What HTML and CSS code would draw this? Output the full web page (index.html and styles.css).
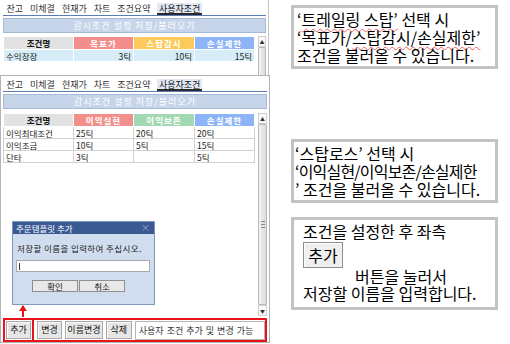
FILE: index.html
```html
<!DOCTYPE html>
<html>
<head>
    <meta charset="utf-8">
    <title>사용자조건</title>
    <link rel="stylesheet" href="styles.css">
</head>
<body>

<div class="page">
    <div class="left">

        <!-- 스탑감시 창 -->
        <div class="win win1">
            <div class="tabs">
                <span class="tab">잔고</span>
                <span class="tab">미체결</span>
                <span class="tab">현재가</span>
                <span class="tab">차트</span>
                <span class="tab">조건요약</span>
                <span class="tab on">사용자조건</span>
            </div>
            <div class="caption">감시조건 설정 저장/불러오기</div>
            <div class="sheet short">
                <table>
                    <colgroup><col class="c0"><col class="c1"><col class="c2"><col class="c3"></colgroup>
                    <tr>
                        <th class="name">조건명</th>
                        <th class="red">목표가</th>
                        <th class="orange">스탑감시</th>
                        <th class="blue">손실제한</th>
                    </tr>
                    <tr class="picked">
                        <td>수익장장</td>
                        <td class="num">3틱</td>
                        <td class="num">10틱</td>
                        <td class="num">15틱</td>
                    </tr>
                </table>
                <div class="vscroll">
                    <div class="arrow">&#9650;</div>
                    <div class="thumb"></div>
                </div>
            </div>
        </div>

        <!-- 스탑로스 창 -->
        <div class="win win2">
            <div class="tabs">
                <span class="tab">잔고</span>
                <span class="tab">미체결</span>
                <span class="tab">현재가</span>
                <span class="tab">차트</span>
                <span class="tab">조건요약</span>
                <span class="tab on">사용자조건</span>
            </div>
            <div class="caption">감시조건 설정 저장/불러오기</div>
            <div class="sheet tall">
                <table>
                    <colgroup><col class="c0"><col class="c1"><col class="c2"><col class="c3"></colgroup>
                    <tr>
                        <th class="name">조건명</th>
                        <th class="red">이익실현</th>
                        <th class="green">이익보존</th>
                        <th class="blue">손실제한</th>
                    </tr>
                    <tr><td>이익최대조건</td><td>25틱</td><td>20틱</td><td>20틱</td></tr>
                    <tr><td>이익조금</td><td>10틱</td><td>5틱</td><td>15틱</td></tr>
                    <tr><td>단타</td><td>3틱</td><td></td><td>5틱</td></tr>
                </table>
                <div class="vscroll">
                    <div class="arrow">&#9650;</div>
                    <div class="thumb"><span class="grip"></span></div>
                    <div class="arrow">&#9660;</div>
                </div>
            </div>

            <div class="btnbar">
                <span class="first"><span class="btn w25">추가</span></span>
                <span class="btn w26">변경</span>
                <span class="btn w39">이름변경</span>
                <span class="btn w27">삭제</span>
                <span class="field">사용자 조건 추가 및 변경 가능</span>
            </div>

            <div class="dialog">
                <div class="dlg-title">주문템플릿 추가<span class="dlg-x">&#215;</span></div>
                <div class="dlg-text">저장할 이름을 입력하여 주십시오.</div>
                <div class="dlg-input"><span class="caret"></span></div>
                <div class="dlg-btns">
                    <span class="dbtn">확인</span>
                    <span class="dbtn">취소</span>
                </div>
            </div>
            <div class="uparrow"></div>
        </div>
    </div>

    <div class="right">
        <div class="note n1">
            ‘<span class="squiggle">트레일링 스탑’</span> 선택 시<br>
            ‘목표가/<span class="squiggle">스탑감시/손실제한’</span><br>
            조건을 불러올 수 있습니다.
        </div>
        <div class="note n2">
            ‘스탑로스’ 선택 시<br>
            <span class="tight">‘이익실현/이익보존/손실제한</span><br>
            ’ 조건을 불러올 수 있습니다.
        </div>
        <div class="note n3">
            조건을 설정한 후 좌측<br>
            <span class="fakebtn">추가</span>
            <div class="indent">버튼을 눌러서</div>
            저장할 이름을 입력합니다.
        </div>
    </div>
</div>

</body>
</html>
```

FILE: styles.css
```css
body{
    margin: 0;
    background: #fff;
    font-family: "Noto Sans CJK KR", "Noto Sans", sans-serif;
    color: #000;
}
.page{
    display: flex;
    width: 510px;
    height: 344px;
    overflow: hidden;
}
.left{
    width: 270px;
    flex: none;
}
.right{
    margin-left: 21px;
    width: 207px;
    flex: none;
}

/* windows */
.win{
    box-sizing: border-box;
    background: #fff;
}
.win1{
    height: 75px;
    overflow: hidden;
    padding: 3px 2px 0 3px;
    width: 269px;
    border-right: 1px solid #c4c4c4;
}
.win2{
    position: relative;
    height: 268px;
    width: 270px;
    border: 1px solid #b4b4b4;
    padding: 3px 2px 0 2px;
}

.tabs{
    display: flex;
    height: 12px;
    border-bottom: 1px solid #5b7db5;
    font-size: 9px;
    line-height: 11px;
    color: #333;
}
.tab{
    padding: 0 3.5px;
    white-space: nowrap;
}
.tab.on{
    background: #e3eaf5;
    border-bottom: 2px solid #2a2a2a;
    color: #111;
    margin-left: 3px;
    padding: 0 2px;
}

.caption{
    margin-top: 2px;
    height: 13px;
    background: #c6d5ea;
    border: 1px solid #a6b9d6;
    color: #fff;
    text-align: center;
    font-size: 9px;
    line-height: 13px;
    letter-spacing: 1px;
}

.sheet{
    display: flex;
    margin-top: 3px;
}
.sheet.short{
    height: 45px;
}
.sheet.tall{
    margin-top: 4px;
    height: 203px;
}
.sheet table{
    width: 251px;
    border-collapse: collapse;
    table-layout: fixed;
    font-size: 8.5px;
    align-self: flex-start;
}
col.c0{ width: 70px; }
col.c1{ width: 60px; }
col.c2{ width: 61px; }
col.c3{ width: 60px; }

th{
    height: 12px;
    padding: 0;
    border: 1px solid #fff;
    color: #fff;
    font-weight: bold;
    line-height: 11px;
    letter-spacing: 1px;
}
th.name{ background: #e2e2e2; color: #111; letter-spacing: 0; }
th.red{ background: #f28f8c; }
th.orange{ background: #fdc95c; }
th.blue{ background: #8db4f6; }
th.green{ background: #a3d8b3; }

td{
    height: 11px;
    padding: 0 2px;
    border: 1px solid #d2d2d2;
    line-height: 10px;
    white-space: nowrap;
    color: #222;
}
tr.picked td{
    background: #d6ecf6;
    border-color: #fff;
}
td.num{
    text-align: right;
}

.vscroll{
    width: 10px;
    margin-left: 3px;
    display: flex;
    flex-direction: column;
}
.arrow{
    height: 11px;
    box-sizing: border-box;
    border: 1px solid #cfcfcf;
    background: #fbfbfb;
    font-size: 5px;
    line-height: 9px;
    text-align: center;
    color: #333;
}
.thumb{
    flex: 1;
    position: relative;
    background: linear-gradient(90deg, #f4f4f4, #dadada);
    border: 1px solid #b9b9b9;
    border-radius: 1px;
}
.grip{
    position: absolute;
    left: 2px;
    top: 96px;
    width: 4px;
    height: 5px;
    border-top: 1px solid #888;
    border-bottom: 1px solid #888;
}
.grip:after{
    content: "";
    position: absolute;
    left: 0;
    top: 2px;
    width: 4px;
    border-top: 1px solid #888;
}

/* bottom buttons */
.btnbar{
    margin-top: 2px;
    height: 24px;
    box-sizing: border-box;
    border: 2px solid #e5141b;
    display: flex;
    align-items: center;
    gap: 3px;
    font-size: 9px;
}
.first{
    align-self: stretch;
    display: flex;
    align-items: center;
    padding: 0 1px 0 1px;
    border-right: 2px solid #e5141b;
}
.btn{
    box-sizing: border-box;
    height: 18px;
    line-height: 16px;
    text-align: center;
    background: #e6e6e6;
    border: 1px solid #a9a9a9;
    box-shadow: inset 1px 1px 0 #fafafa;
    color: #111;
}
.w25{ width: 25px; }
.w26{ width: 26px; }
.w39{ width: 39px; }
.w27{ width: 27px; }
.field{
    box-sizing: border-box;
    width: 135px;
    height: 19px;
    line-height: 17px;
    border: 1px solid #b4b4b4;
    padding-left: 3px;
    color: #333;
    word-spacing: 1px;
}

/* dialog over the sheet */
.dialog{
    position: absolute;
    left: 11px;
    top: 145px;
    width: 143px;
    height: 84px;
    box-sizing: border-box;
    background: #d0ddee;
    border: 1px solid #7d97bf;
    font-size: 8.5px;
}
.dlg-title{
    height: 12px;
    background: #3b5a94;
    color: #fff;
    line-height: 12px;
    padding-left: 3px;
    position: relative;
}
.dlg-x{
    position: absolute;
    right: 4px;
    top: 0;
    color: #9fb0cf;
    font-size: 9px;
}
.dlg-text{
    margin: 9px 0 0 4px;
    line-height: 11px;
    letter-spacing: 0.4px;
    color: #222;
}
.dlg-input{
    margin: 6px 0 0 3px;
    width: 134px;
    height: 12px;
    box-sizing: border-box;
    background: #fff;
    border: 1px solid #a9a9a9;
    position: relative;
}
.caret{
    position: absolute;
    left: 2px;
    top: 2px;
    height: 7px;
    border-left: 1px solid #333;
}
.dlg-btns{
    display: flex;
    gap: 1px;
    margin: 8px 0 0 19px;
}
.dbtn{
    box-sizing: border-box;
    width: 46px;
    height: 12px;
    line-height: 10px;
    text-align: center;
    background: #e8e8e8;
    border: 1px solid #8f8f8f;
    color: #111;
}

.uparrow{
    position: absolute;
    left: 21px;
    top: 230px;
    width: 2px;
    height: 11px;
    background: #e5141b;
}
.uparrow:before{
    content: "";
    position: absolute;
    left: -3px;
    top: -1px;
    border-left: 4px solid transparent;
    border-right: 4px solid transparent;
    border-bottom: 6px solid #e5141b;
}

/* notes on the right */
.note{
    border: 3px solid #c3c3c3;
    font-size: 16px;
    line-height: 18px;
    white-space: nowrap;
    overflow: hidden;
}
.n1{
    margin-top: 5px;
    padding: 2px 3px;
}
.n2{
    margin-top: 70px;
    padding: 2px 0 2px 1px;
}
.n3{
    margin-top: 14px;
    padding: 3px 6px 5px 9px;
    line-height: 17px;
}
.squiggle{
    text-decoration: underline wavy #f06060;
    text-decoration-thickness: 1px;
    text-underline-offset: 2px;
}
.tight{
    letter-spacing: -0.8px;
}
.fakebtn{
    display: inline-block;
    box-sizing: border-box;
    width: 40px;
    height: 26px;
    margin-top: 2px;
    line-height: 24px;
    text-align: center;
    background: #efefef;
    border: 1px solid #8e8e8e;
    box-shadow: inset 1px 1px 0 #fff;
}
.indent{
    padding-left: 52px;
}
```
